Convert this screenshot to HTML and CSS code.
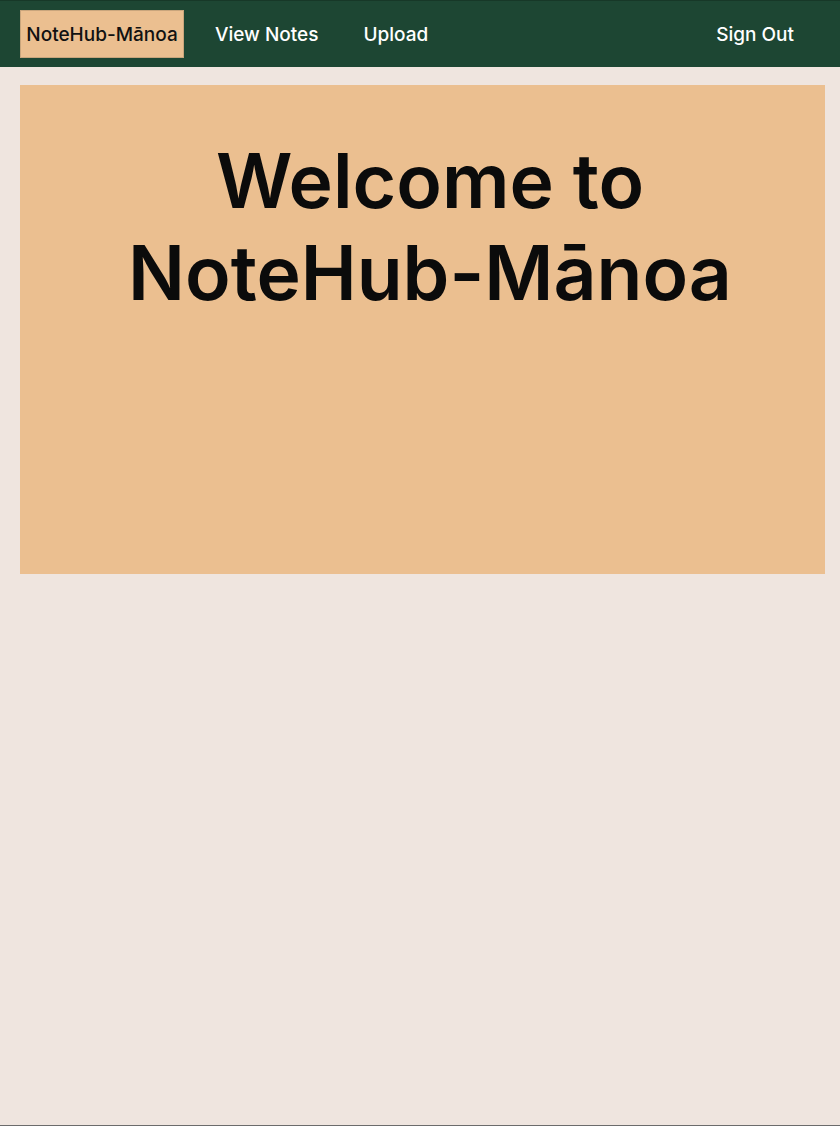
FILE: index.html
```html
<!DOCTYPE html>
<html lang="en">
<head>
<meta charset="utf-8">
<title>NoteHub-Mānoa</title>
<link rel="stylesheet" href="styles.css">
</head>
<body>
<nav class="navbar">
  <a class="brand" href="#">NoteHub-Mānoa</a>
  <div class="nav-links">
    <a class="nav-link" href="#">View Notes</a>
    <a class="nav-link" href="#">Upload</a>
  </div>
  <a class="nav-link signout" href="#">Sign Out</a>
</nav>
<main class="page">
  <section class="hero">
    <h1 class="hero-title">Welcome to<br>NoteHub-Mānoa</h1>
  </section>
</main>
</body>
</html>
```
FILE: styles.css
```css
html, body {
  margin: 0;
  padding: 0;
  height: 100%;
}
body {
  background: #efe5df;
  font-family: Inter, "Noto Sans", sans-serif;
  box-sizing: border-box;
  border-bottom: 1px solid #6b6b6b;
}
.navbar {
  display: flex;
  align-items: center;
  height: 67px;
  box-sizing: border-box;
  background: #1d4633;
  border-top: 1px solid #173828;
  padding: 0 46px 0 20px;
}
.brand {
  display: flex;
  align-items: center;
  justify-content: center;
  width: 164px;
  height: 48px;
  box-sizing: border-box;
  background: #ebbf90;
  border: 1px solid #c9a57c;
  color: #111;
  font-size: 19px;
  font-weight: 500;
  text-decoration: none;
}
.nav-links {
  display: flex;
  gap: 45px;
  margin-left: 31px;
  flex: 1;
}
.nav-link {
  color: #fff;
  font-size: 19px;
  font-weight: 500;
  text-decoration: none;
}
.page {
  padding: 18px 15px 0 20px;
}
.hero {
  background: #ebbf90;
  height: 489px;
  padding: 50px 0 0 15px;
  box-sizing: border-box;
}
.hero-title {
  margin: 0;
  text-align: center;
  font-size: 75px;
  line-height: 92px;
  font-weight: 600;
  color: #0b0b0b;
}
```
